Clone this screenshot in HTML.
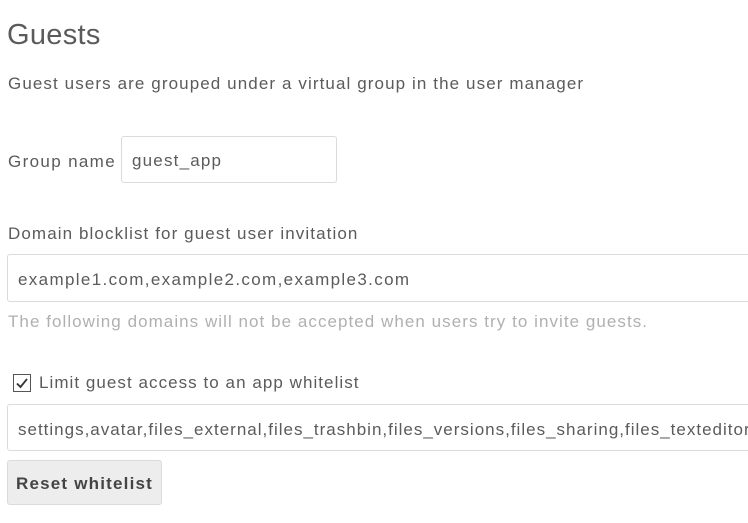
<!DOCTYPE html>
<html><head><style>
body{margin:0;background:#fff;font-family:"Liberation Sans",sans-serif;color:#5b5b5b;width:748px;height:523px;overflow:hidden;position:relative}
.a{position:absolute;white-space:nowrap}
.inp{position:absolute;border:1px solid #dbdbdb;border-radius:3px;box-sizing:border-box;background:#fff;font-size:17px;color:#5b5b5b;padding-left:10px;overflow:hidden;white-space:nowrap}
</style></head><body>
<div class="a" style="left:7px;top:19px;font-size:29px;letter-spacing:0.3px">Guests</div>
<div class="a" style="left:8px;top:74px;font-size:17px;letter-spacing:1.1px">Guest users are grouped under a virtual group in the user manager</div>
<div class="a" style="left:8px;top:152px;font-size:17px;letter-spacing:1.35px">Group name</div>
<div class="inp" style="left:121px;top:136px;width:216px;height:47px;line-height:47px;letter-spacing:1.2px">guest_app</div>
<div class="a" style="left:8px;top:224px;font-size:17px;letter-spacing:1.1px">Domain blocklist for guest user invitation</div>
<div class="inp" style="left:7px;top:254px;width:760px;height:48px;line-height:50px;letter-spacing:1.35px">example1.com,example2.com,example3.com</div>
<div class="a" style="left:8px;top:312px;font-size:17px;color:#b0b0b0;letter-spacing:1.05px">The following domains will not be accepted when users try to invite guests.</div>
<div class="a" style="left:13px;top:374px;width:16px;height:16px;border:1px solid #555;background:#fff">
<svg width="16" height="16" viewBox="0 0 16 16" style="position:absolute;left:0;top:0"><path d="M3 8.5 L6.5 12 L13 4" fill="none" stroke="#333" stroke-width="1.8"/></svg></div>
<div class="a" style="left:39px;top:373px;font-size:17px;letter-spacing:1.05px">Limit guest access to an app whitelist</div>
<div class="inp" style="left:7px;top:404px;width:760px;height:47px;line-height:49px;letter-spacing:1.0px">settings,avatar,files_external,files_trashbin,files_versions,files_sharing,files_texteditor,</div>
<div class="a" style="left:7px;top:460px;width:155px;height:45px;box-sizing:border-box;border:1px solid #dbdbdb;border-radius:3px;background:#ededed;font-weight:bold;font-size:17px;line-height:45px;text-align:center;color:#444;letter-spacing:1.2px">Reset whitelist</div>
</body></html>
